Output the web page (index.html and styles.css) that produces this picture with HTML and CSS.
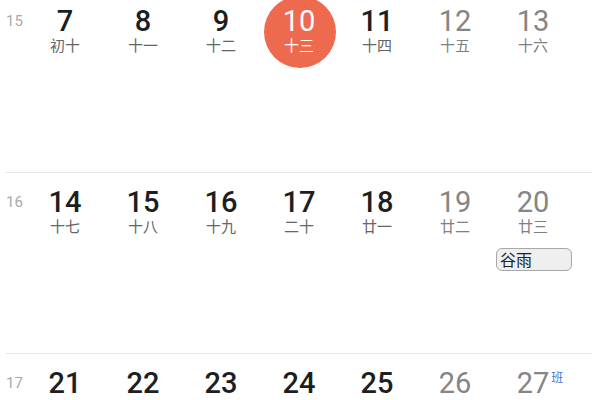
FILE: index.html
```html
<!DOCTYPE html>
<html lang="zh">
<head>
<meta charset="utf-8">
<link rel="stylesheet" href="styles.css">
</head>
<body>
<div class="cal">
  <div class="week first">
    <div class="wk">15</div>
    <div class="day"><div class="num">7</div><div class="lunar">初十</div></div>
    <div class="day"><div class="num">8</div><div class="lunar">十一</div></div>
    <div class="day"><div class="num">9</div><div class="lunar">十二</div></div>
    <div class="day today"><div class="num">10</div><div class="lunar">十三</div></div>
    <div class="day"><div class="num">11</div><div class="lunar">十四</div></div>
    <div class="day off"><div class="num">12</div><div class="lunar">十五</div></div>
    <div class="day off"><div class="num">13</div><div class="lunar">十六</div></div>
  </div>
  <div class="week">
    <div class="wk">16</div>
    <div class="day"><div class="num">14</div><div class="lunar">十七</div></div>
    <div class="day"><div class="num">15</div><div class="lunar">十八</div></div>
    <div class="day"><div class="num">16</div><div class="lunar">十九</div></div>
    <div class="day"><div class="num">17</div><div class="lunar">二十</div></div>
    <div class="day"><div class="num">18</div><div class="lunar">廿一</div></div>
    <div class="day off"><div class="num">19</div><div class="lunar">廿二</div></div>
    <div class="day off"><div class="num">20</div><div class="lunar">廿三</div><div class="event">谷雨</div></div>
  </div>
  <div class="week">
    <div class="wk">17</div>
    <div class="day"><div class="num">21</div><div class="lunar">廿四</div></div>
    <div class="day"><div class="num">22</div><div class="lunar">廿五</div></div>
    <div class="day"><div class="num">23</div><div class="lunar">廿六</div></div>
    <div class="day"><div class="num">24</div><div class="lunar">廿七</div></div>
    <div class="day"><div class="num">25</div><div class="lunar">廿八</div></div>
    <div class="day off"><div class="num">26</div><div class="lunar">廿九</div></div>
    <div class="day off"><div class="num">27<span class="tag">班</span></div><div class="lunar">三十</div></div>
  </div>
</div>
</body>
</html>
```
FILE: styles.css
```css
html, body {
  margin: 0;
  padding: 0;
  background: #fff;
  overflow: hidden;
}
body {
  width: 600px;
  height: 400px;
  font-family: Roboto, "Noto Sans CJK SC", sans-serif;
}
.cal {
  margin: 0 8px 0 6px;
}
.week {
  display: grid;
  grid-template-columns: 20px repeat(7, 78px);
  align-items: start;
  height: 181px;
  box-sizing: border-box;
  border-top: 1px solid #e6e6e6;
  padding-top: 13px;
}
.week.first {
  height: 172px;
  border-top: none;
  padding-top: 5px;
}
.wk {
  font-size: 15px;
  line-height: 32px;
  color: #aaa;
}
.day {
  position: relative;
  display: flex;
  flex-direction: column;
  align-items: center;
}
.num {
  position: relative;
  font-size: 29px;
  font-weight: 500;
  line-height: 32px;
  color: #1e1e1e;
}
.lunar {
  position: relative;
  font-family: "Noto Sans CJK SC", sans-serif;
  font-size: 15px;
  font-weight: 400;
  line-height: 15px;
  color: #666;
}
.off .num {
  color: #858585;
  font-weight: 400;
}
.off .lunar {
  color: #808080;
}
.today::before {
  content: "";
  position: absolute;
  width: 72px;
  height: 72px;
  border-radius: 50%;
  background: #ee6a4f;
  left: calc(50% - 35px);
  top: -9px;
}
.today .num {
  color: #fff;
  font-weight: 400;
}
.today .lunar {
  color: #fff;
}
.event {
  align-self: flex-start;
  margin: 15px 0 0 2px;
  width: 76px;
  height: 23px;
  box-sizing: border-box;
  border: 1px solid #a8a8a8;
  border-radius: 6px;
  background: #efefef;
  font-family: "Noto Sans CJK SC", sans-serif;
  font-size: 16px;
  line-height: 21px;
  padding-left: 3px;
  color: #222;
}
.tag {
  position: absolute;
  left: 100%;
  top: 3px;
  margin-left: 2px;
  font-family: "Noto Sans CJK SC", sans-serif;
  font-size: 12px;
  line-height: 14px;
  color: #4f72c8;
}
```
